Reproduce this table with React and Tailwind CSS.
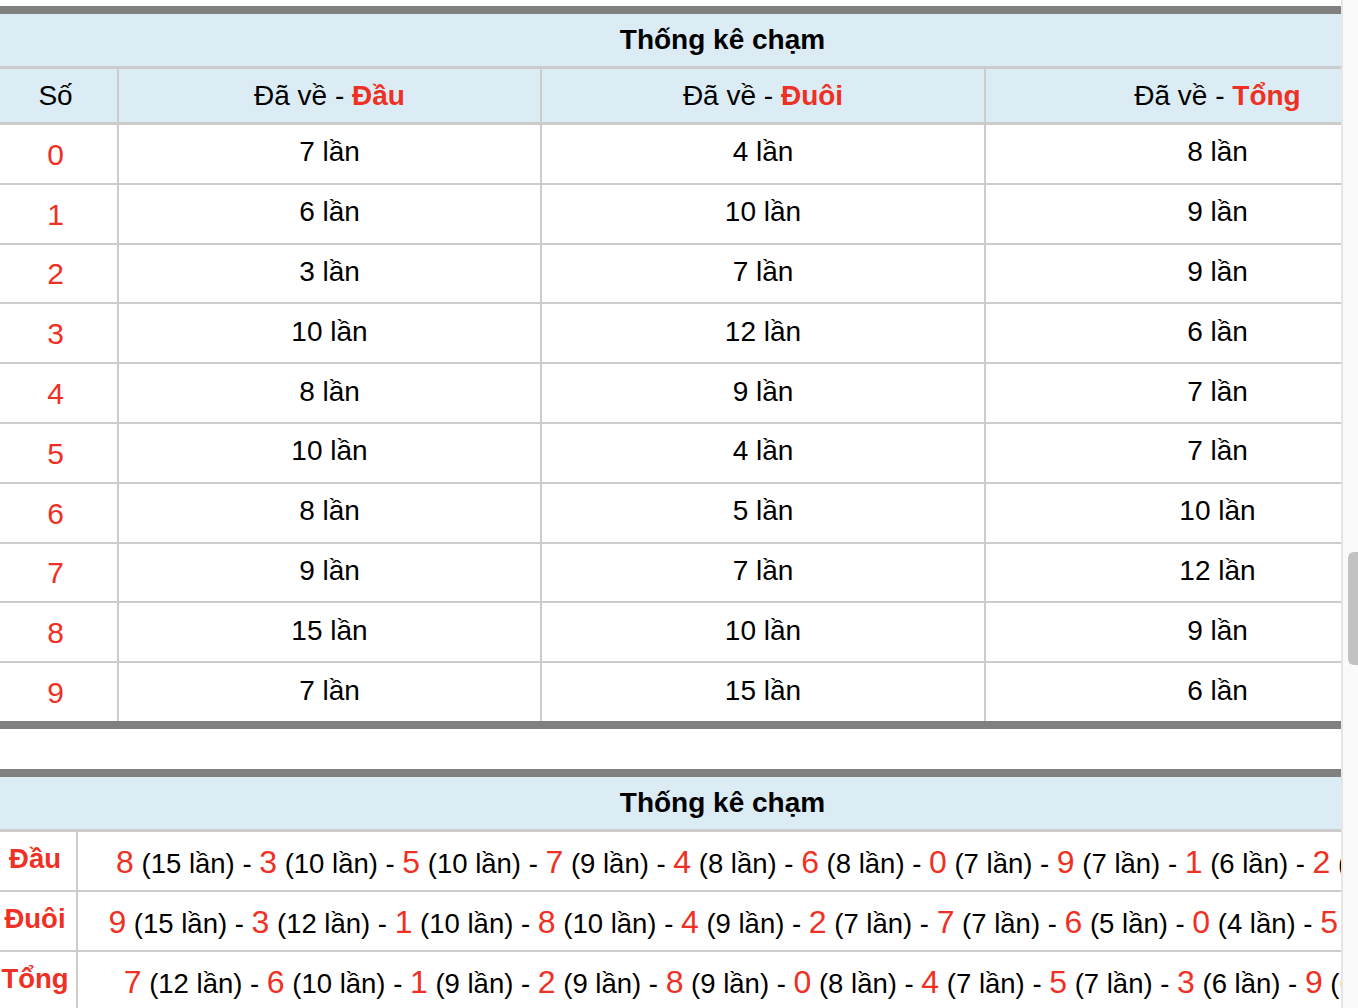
import React from "react";

const top = [
  [0, 7, 4, 8],
  [1, 6, 10, 9],
  [2, 3, 7, 9],
  [3, 10, 12, 6],
  [4, 8, 9, 7],
  [5, 10, 4, 7],
  [6, 8, 5, 10],
  [7, 9, 7, 12],
  [8, 15, 10, 9],
  [9, 7, 15, 6],
];

const bottom = [
  ["Đầu", [[8, 15], [3, 10], [5, 10], [7, 9], [4, 8], [6, 8], [0, 7], [9, 7], [1, 6], [2, 3]]],
  ["Đuôi", [[9, 15], [3, 12], [1, 10], [8, 10], [4, 9], [2, 7], [7, 7], [6, 5], [0, 4], [5, 4]]],
  ["Tổng", [[7, 12], [6, 10], [1, 9], [2, 9], [8, 9], [0, 8], [4, 7], [5, 7], [3, 6], [9, 6]]],
];

function Title() {
  return (
    <div className="h-[55px] bg-[#dcecf5] border-b-[3px] border-[#cccccc] flex items-center justify-center font-bold text-[28px] text-black">
      Thống kê chạm
    </div>
  );
}

export default function App() {
  return (
    <div
      className="h-[1008px] w-[1358px] overflow-hidden flex bg-white text-black"
      style={{ fontFamily: '"Liberation Sans", Arial, Helvetica, sans-serif' }}
    >
      <div className="w-[1341px] h-full overflow-hidden pt-[6px]">
        {/* Top table */}
        <div className="w-[1445px] border-t-8 border-b-8 border-[#808080]">
          <Title />
          <div className="h-[56px] bg-[#dcecf5] border-b-[3px] border-[#cccccc] flex text-[28px]">
            <div className="w-[119px] border-r-2 border-[#cccccc] flex items-center justify-center pr-[6px] pt-[1px]">Số</div>
            <div className="w-[423px] border-r-2 border-[#cccccc] flex items-center justify-center pt-[1px]">
              <span>Đã về -&nbsp;</span>
              <span className="font-bold text-[#ee3124]">Đầu</span>
            </div>
            <div className="w-[444px] border-r-2 border-[#cccccc] flex items-center justify-center pt-[1px]">
              <span>Đã về -&nbsp;</span>
              <span className="font-bold text-[#ee3124]">Đuôi</span>
            </div>
            <div className="flex-1 flex items-center justify-center pt-[1px] pl-[4px]">
              <span>Đã về -&nbsp;</span>
              <span className="font-bold text-[#ee3124]">Tổng</span>
            </div>
          </div>
          {top.map((r, i) => (
            <div
              key={i}
              className={
                i < 9
                  ? "h-[59.8px] border-b-2 border-[#cccccc] flex text-[28px]"
                  : "h-[57.8px] flex text-[28px]"
              }
            >
              <div className="w-[119px] border-r-2 border-[#cccccc] flex items-center justify-center pr-[6px] text-[30px] text-[#ee3124] pt-[1px]">
                {r[0]}
              </div>
              <div className="w-[423px] border-r-2 border-[#cccccc] flex items-center justify-center pb-[3px]">
                {r[1]} lần
              </div>
              <div className="w-[444px] border-r-2 border-[#cccccc] flex items-center justify-center pb-[3px]">
                {r[2]} lần
              </div>
              <div className="flex-1 flex items-center justify-center pb-[3px] pl-[4px]">{r[3]} lần</div>
            </div>
          ))}
        </div>

        {/* Bottom table */}
        <div className="w-[1445px] mt-[40px] border-t-8 border-[#808080]">
          <Title />
          {bottom.map(([label, items], i) => (
            <div key={i} className="h-[60px] border-b-2 border-[#cccccc] flex">
              <div className="w-[78px] shrink-0 border-r-2 border-[#cccccc] flex items-center justify-center pr-[6px] pb-[4px] font-bold text-[27.5px] text-[#ee3124]">
                {label}
              </div>
              <div className="flex-1 flex items-center justify-center whitespace-nowrap pl-[9px] pt-[2px]">
                <div className="whitespace-pre text-[27.5px] shrink-0">
                  {items.map(([d, c], j) => (
                    <React.Fragment key={j}>
                      <span className="text-[32px] text-[#ee3124]">{d}</span>
                      <span>{` (${c} lần)`}</span>
                      {j < items.length - 1 ? <span>{" - "}</span> : null}
                    </React.Fragment>
                  ))}
                </div>
              </div>
            </div>
          ))}
        </div>
      </div>

      {/* Scrollbar */}
      <div className="w-[17px] h-full bg-[#fafafa] border-l-2 border-[#e6e6e6] flex flex-col pt-[552px] pl-[5px]">
        <div className="h-[113px] w-full bg-[#c2c2c2] rounded-l-[6px]" />
      </div>
    </div>
  );
}
